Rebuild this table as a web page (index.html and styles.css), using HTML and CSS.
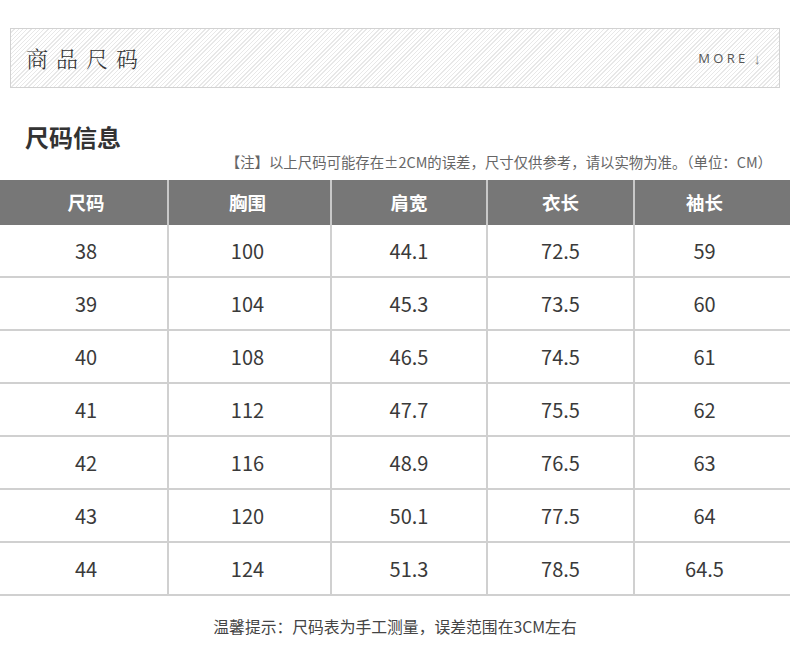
FILE: index.html
```html
<!DOCTYPE html>
<html lang="zh">
<head>
<meta charset="utf-8">
<link rel="stylesheet" href="styles.css">
</head>
<body>
<div class="banner">
  <div class="banner-title">商品尺码</div>
  <div class="more">MORE <span class="arrow">↓</span></div>
</div>
<div class="info-head">
  <h2 class="info-title">尺码信息</h2>
  <p class="note">【注】以上尺码可能存在±2CM的误差，尺寸仅供参考，请以实物为准。（单位：CM）</p>
</div>
<div class="table">
  <div class="row head"><div>尺码</div><div>胸围</div><div>肩宽</div><div>衣长</div><div>袖长</div></div>
  <div class="row"><div>38</div><div>100</div><div>44.1</div><div>72.5</div><div>59</div></div>
  <div class="row"><div>39</div><div>104</div><div>45.3</div><div>73.5</div><div>60</div></div>
  <div class="row"><div>40</div><div>108</div><div>46.5</div><div>74.5</div><div>61</div></div>
  <div class="row"><div>41</div><div>112</div><div>47.7</div><div>75.5</div><div>62</div></div>
  <div class="row"><div>42</div><div>116</div><div>48.9</div><div>76.5</div><div>63</div></div>
  <div class="row"><div>43</div><div>120</div><div>50.1</div><div>77.5</div><div>64</div></div>
  <div class="row"><div>44</div><div>124</div><div>51.3</div><div>78.5</div><div>64.5</div></div>
</div>
<p class="tip">温馨提示：尺码表为手工测量，误差范围在3CM左右</p>
</body>
</html>
```
FILE: styles.css
```css
html, body {
  margin: 0;
  padding: 0;
  background: #fff;
}
body {
  width: 790px;
  font-family: "Noto Sans CJK SC", "Noto Sans", sans-serif;
  color: #333;
}
.banner {
  margin: 28px 10px 0 10px;
  height: 58px;
  border: 1px solid #d2d2d2;
  background: repeating-linear-gradient(135deg, #fff 0px, #fff 2px, #e8e8e8 2px, #e8e8e8 3px);
  display: flex;
  align-items: center;
  justify-content: space-between;
  padding: 0 18px 0 15px;
}
.banner-title {
  font-family: "Noto Serif CJK SC", "Liberation Serif", "Noto Sans CJK SC", serif;
  font-size: 22px;
  letter-spacing: 8px;
  color: #333;
  font-weight: 300;
  padding-bottom: 2px;
}
.more {
  font-family: "Open Sans", "Liberation Sans", sans-serif;
  font-size: 13px;
  letter-spacing: 3.3px;
  color: #555;
  display: flex;
  align-items: center;
}
.arrow {
  font-size: 15px;
  color: #888;
  margin-left: 5px;
  letter-spacing: 0;
}
.info-head {
  padding: 0 25px 0 25px;
  height: 92px;
}
.info-title {
  margin: 0;
  padding-top: 34px;
  font-size: 24px;
  line-height: 30px;
  font-weight: 700;
  color: #333;
}
.note {
  margin: 0 -7px 0 0;
  text-align: right;
  font-size: 14.4px;
  line-height: 18px;
  color: #666;
  padding-top: 1px;
}
.table {
  width: 790px;
}
.row {
  display: grid;
  grid-template-columns: 167px 163px 156px 147px 1fr;
  height: 53px;
  border-bottom: 2px solid #d0d0d0;
  box-sizing: border-box;
}
.row > div {
  display: flex;
  align-items: center;
  justify-content: center;
  font-size: 20px;
  color: #3a3a3a;
}
.row > div:first-child {
  padding-left: 5px;
}
.row > div:nth-child(2) {
  padding-right: 4px;
}
.row > div:last-child {
  padding-right: 16px;
}
.row > div + div {
  border-left: 2px solid #d0d0d0;
}
.row.head {
  background: #777;
  height: 45px;
  border-bottom: none;
}
.row.head > div {
  color: #fff;
  font-weight: 700;
  font-size: 18.5px;
  padding-bottom: 2px;
}
.row.head > div + div {
  border-left: 2px solid #c8c8c8;
}
.tip {
  margin: 0;
  padding-top: 19px;
  text-align: center;
  font-size: 15.8px;
  color: #444;
}
```
